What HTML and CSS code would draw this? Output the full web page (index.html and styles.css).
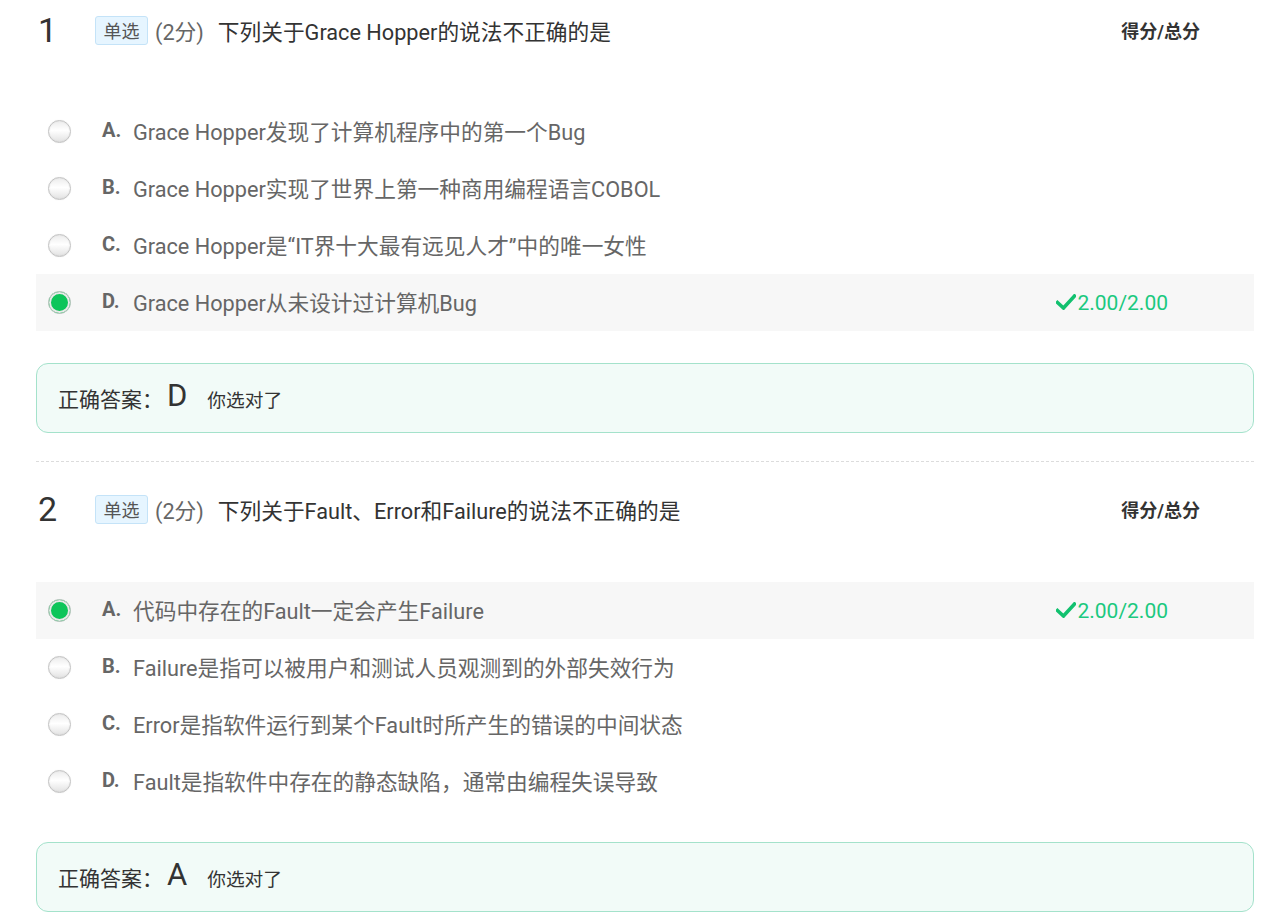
FILE: index.html
```html
<!DOCTYPE html>
<html lang="zh">
<head>
<meta charset="utf-8">
<link rel="stylesheet" href="styles.css">
</head>
<body>
<div class="quiz">
  <div class="question">
    <div class="q-head">
      <span class="q-num">1</span>
      <span class="q-tag">单选</span>
      <span class="q-pts">(2分)</span>
      <span class="q-title">下列关于Grace Hopper的说法不正确的是</span>
      <span class="q-score-h">得分/总分</span>
    </div>
    <div class="options">
      <div class="opt"><span class="radio"></span><span class="opt-letter">A.</span><span class="opt-text">Grace Hopper发现了计算机程序中的第一个Bug</span></div>
      <div class="opt"><span class="radio"></span><span class="opt-letter">B.</span><span class="opt-text">Grace Hopper实现了世界上第一种商用编程语言COBOL</span></div>
      <div class="opt"><span class="radio"></span><span class="opt-letter">C.</span><span class="opt-text">Grace Hopper是“IT界十大最有远见人才”中的唯一女性</span></div>
      <div class="opt selected"><span class="radio checked"></span><span class="opt-letter">D.</span><span class="opt-text">Grace Hopper从未设计过计算机Bug</span>
        <span class="score"><svg class="tick" viewBox="0 0 20 16" width="20" height="16"><path d="M1.5 8.5 L7.5 14 L18.5 2" fill="none" stroke="#12c16f" stroke-width="3.6" stroke-linecap="square"/></svg>2.00/2.00</span></div>
    </div>
    <div class="answer"><span class="ans-label">正确答案：</span><span class="ans-key">D</span><span class="ans-note">你选对了</span></div>
  </div>
  <div class="question">
    <div class="q-head">
      <span class="q-num">2</span>
      <span class="q-tag">单选</span>
      <span class="q-pts">(2分)</span>
      <span class="q-title">下列关于Fault、Error和Failure的说法不正确的是</span>
      <span class="q-score-h">得分/总分</span>
    </div>
    <div class="options">
      <div class="opt selected"><span class="radio checked"></span><span class="opt-letter">A.</span><span class="opt-text">代码中存在的Fault一定会产生Failure</span>
        <span class="score"><svg class="tick" viewBox="0 0 20 16" width="20" height="16"><path d="M1.5 8.5 L7.5 14 L18.5 2" fill="none" stroke="#12c16f" stroke-width="3.6" stroke-linecap="square"/></svg>2.00/2.00</span></div>
      <div class="opt"><span class="radio"></span><span class="opt-letter">B.</span><span class="opt-text">Failure是指可以被用户和测试人员观测到的外部失效行为</span></div>
      <div class="opt"><span class="radio"></span><span class="opt-letter">C.</span><span class="opt-text">Error是指软件运行到某个Fault时所产生的错误的中间状态</span></div>
      <div class="opt"><span class="radio"></span><span class="opt-letter">D.</span><span class="opt-text">Fault是指软件中存在的静态缺陷，通常由编程失误导致</span></div>
    </div>
    <div class="answer"><span class="ans-label">正确答案：</span><span class="ans-key">A</span><span class="ans-note">你选对了</span></div>
  </div>
</div>
</body>
</html>
```
FILE: styles.css
```css
* { box-sizing: border-box; }
body {
  margin: 0;
  background: #fff;
  font-family: Roboto, "Noto Sans CJK SC", sans-serif;
  color: #333;
}
.quiz {
  padding: 0 30px 0 36px;
}
.question {
  padding: 29px 0 28px;
  border-bottom: 1px dashed #dcdcdc;
}
.question:first-child { padding-top: 12px; }
.question:last-child { border-bottom: none; }
.q-head {
  display: flex;
  align-items: center;
  height: 36px;
}
.q-num {
  font-size: 34px;
  width: 59px;
  padding-left: 2px;
  color: #333;
  line-height: 36px;
}
.q-tag {
  display: inline-flex;
  align-items: center;
  justify-content: center;
  width: 53px;
  height: 29px;
  background: #e6f5ff;
  border: 1px solid #c4e3f8;
  border-radius: 3px;
  font-size: 18px;
  color: #555;
}
.q-pts {
  margin-left: 7px;
  font-size: 21.7px;
  color: #666;
}
.q-title {
  margin-left: 14px;
  font-size: 21.7px;
  color: #333;
  flex: 1;
}
.q-score-h {
  font-size: 18px;
  font-weight: bold;
  color: #333;
  margin-right: 54px;
}
.options {
  margin-top: 55px;
}
.opt {
  display: flex;
  align-items: center;
  height: 57px;
  padding-left: 12px;
}
.opt.selected { background: #f7f7f7; }
.radio {
  flex: none;
  width: 23px;
  height: 23px;
  border-radius: 50%;
  border: 1px solid #c2c2c2;
  background: linear-gradient(#ececec, #ffffff 45%, #e2e2e2);
  box-shadow: inset 0 0 2px rgba(0,0,0,0.08), 0 0 1px rgba(0,0,0,0.1);
}
.radio.checked {
  background: #0dc55a;
  box-shadow: inset 0 0 0 2px #e9e9e9;
  border-color: #c4c4c4;
}
.opt-letter {
  margin-left: 31px;
  width: 31px;
  font-weight: bold;
  font-size: 20px;
  color: #666;
  padding-bottom: 3px;
}
.opt-text {
  font-size: 21.7px;
  color: #666;
  flex: 1;
  padding-bottom: 2px;
}
.score {
  display: flex;
  align-items: center;
  font-size: 21px;
  color: #1bc97f;
  margin-right: 86px;
}
.tick { margin-right: 1px; margin-top: -2px; }
.answer {
  margin-top: 32px;
  height: 70px;
  display: flex;
  align-items: center;
  padding-left: 21px;
  background: #f2fbf8;
  border: 1px solid #a4e2cb;
  border-radius: 12px;
}
.ans-label {
  font-size: 21px;
  color: #333;
}
.ans-key {
  font-size: 31px;
  color: #333;
  margin-left: 4px;
  margin-bottom: 6px;
}
.ans-note {
  font-size: 18.7px;
  color: #333;
  margin-left: 20px;
}
```
